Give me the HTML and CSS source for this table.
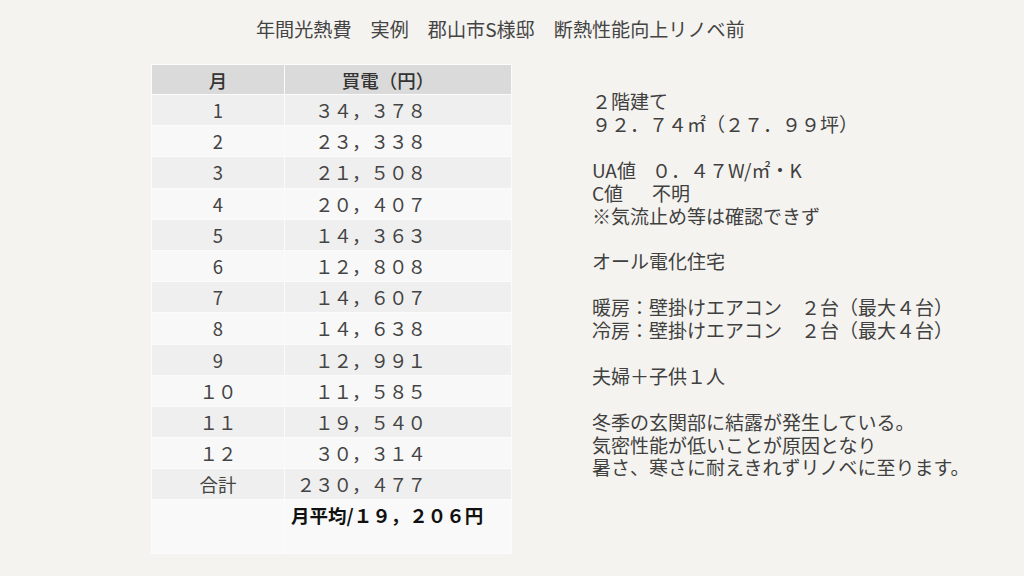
FILE: index.html
```html
<!DOCTYPE html>
<html lang="ja">
<head>
<meta charset="utf-8">
<link rel="stylesheet" href="styles.css">
</head>
<body>
<div class="page">
  <h1 class="title">年間光熱費　実例　郡山市S様邸　断熱性能向上リノベ前</h1>
  <div class="main">
    <table class="bill">
      <thead>
        <tr><th class="c-month">月</th><th class="c-amt">買電（円）</th></tr>
      </thead>
      <tbody>
        <tr class="odd"><td class="c-month">1</td><td class="c-amt">３４，３７８</td></tr>
        <tr class="even"><td class="c-month">2</td><td class="c-amt">２３，３３８</td></tr>
        <tr class="odd"><td class="c-month">3</td><td class="c-amt">２１，５０８</td></tr>
        <tr class="even"><td class="c-month">4</td><td class="c-amt">２０，４０７</td></tr>
        <tr class="odd"><td class="c-month">5</td><td class="c-amt">１４，３６３</td></tr>
        <tr class="even"><td class="c-month">6</td><td class="c-amt">１２，８０８</td></tr>
        <tr class="odd"><td class="c-month">7</td><td class="c-amt">１４，６０７</td></tr>
        <tr class="even"><td class="c-month">8</td><td class="c-amt">１４，６３８</td></tr>
        <tr class="odd"><td class="c-month">9</td><td class="c-amt">１２，９９１</td></tr>
        <tr class="even"><td class="c-month">１０</td><td class="c-amt">１１，５８５</td></tr>
        <tr class="odd"><td class="c-month">１１</td><td class="c-amt">１９，５４０</td></tr>
        <tr class="even"><td class="c-month">１２</td><td class="c-amt">３０，３１４</td></tr>
        <tr class="odd"><td class="c-month">合計</td><td class="c-amt">２３０，４７７</td></tr>
        <tr class="last"><td class="c-month"></td><td class="c-avg">月平均/１９，２０６円</td></tr>
      </tbody>
    </table>
    <div class="notes">
      <p>２階建て<br>９２．７４㎡（２７．９９坪）</p>
      <p><span class="lbl">UA値</span>０．４７W/㎡・K<br><span class="lbl">C値</span>不明<br>※気流止め等は確認できず</p>
      <p class="gap-more">オール電化住宅</p>
      <p>暖房：壁掛けエアコン　２台（最大４台）<br>冷房：壁掛けエアコン　２台（最大４台）</p>
      <p>夫婦＋子供１人</p>
      <p>冬季の玄関部に結露が発生している。<br>気密性能が低いことが原因となり<br>暑さ、寒さに耐えきれずリノベに至ります。</p>
    </div>
  </div>
</div>
</body>
</html>
```

FILE: styles.css
```css
html, body {
  margin: 0;
  padding: 0;
}
body {
  width: 1024px;
  height: 576px;
  overflow: hidden;
  background: #f4f3ef;
  font-family: "Noto Sans CJK JP", "Noto Sans", sans-serif;
  color: #404040;
}
.page {
  display: flex;
  flex-direction: column;
}
.title {
  margin: 0;
  padding: 15px 0 0 256px;
  height: 64px;
  box-sizing: border-box;
  font-size: 19.1px;
  line-height: 28px;
  font-weight: 400;
  color: #444;
  white-space: nowrap;
}
.main {
  display: flex;
  align-items: flex-start;
}
.bill {
  margin-left: 151px;
  border-collapse: collapse;
  table-layout: fixed;
  width: 361px;
  font-size: 18.5px;
  color: #444;
}
.bill th, .bill td {
  border: 1px solid #fbfbfb;
  padding: 0;
  white-space: nowrap;
  line-height: 24px;
}
.bill th {
  background: #dadada;
  height: 29px;
  font-weight: 500;
  color: #333;
}
.bill td {
  height: 30.2px;
}
.bill .c-month {
  width: 132px;
  text-align: center;
}
.bill th.c-amt {
  text-align: center;
  padding-right: 20px;
}
.bill td.c-amt {
  text-align: right;
  padding-right: 85px;
}
.bill tr.odd td { background: #efefef; }
.bill tr.even td { background: #f8f8f8; }
.bill tr.last td {
  background: #f9f9f9;
  height: 50px;
  vertical-align: top;
}
.bill td.c-avg {
  text-align: left;
  padding-left: 6px;
  padding-top: 3px;
  font-weight: 700;
  color: #111;
}
.notes {
  margin-left: 80px;
  margin-top: 26px;
  font-size: 19px;
  line-height: 22.9px;
  color: #404040;
}
.notes p {
  margin: 0 0 22.9px 0;
  white-space: nowrap;
}
.notes p.gap-more {
  margin-top: 2px;
}
.lbl {
  display: inline-block;
  width: 60px;
}
```
